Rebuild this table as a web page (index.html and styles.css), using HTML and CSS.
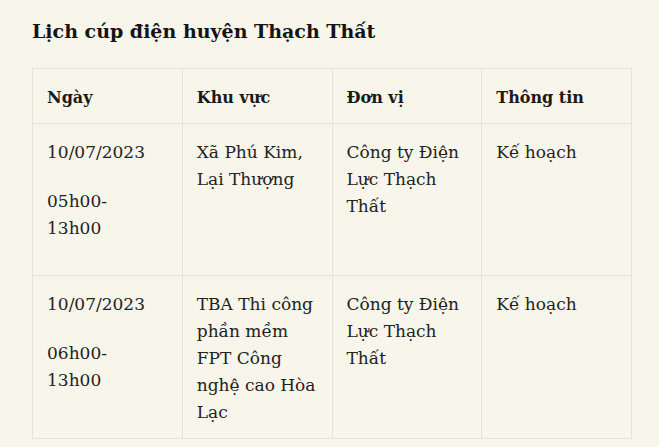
FILE: index.html
```html
<!DOCTYPE html>
<html lang="vi">
<head>
<meta charset="utf-8">
<link rel="stylesheet" href="styles.css">
</head>
<body>
<div class="page">
  <h2 class="title">Lịch cúp điện huyện Thạch Thất</h2>
  <table class="schedule">
    <thead>
      <tr>
        <th>Ngày</th>
        <th>Khu vực</th>
        <th>Đơn vị</th>
        <th>Thông tin</th>
      </tr>
    </thead>
    <tbody>
      <tr>
        <td class="date-cell"><p class="para">10/07/2023</p><p class="para">05h00-13h00</p></td>
        <td>Xã Phú Kim, Lại Thượng</td>
        <td>Công ty Điện Lực Thạch Thất</td>
        <td>Kế hoạch</td>
      </tr>
      <tr>
        <td class="date-cell"><p class="para">10/07/2023</p><p class="para">06h00-13h00</p></td>
        <td>TBA Thi công phần mềm FPT Công nghệ cao Hòa Lạc</td>
        <td>Công ty Điện Lực Thạch Thất</td>
        <td>Kế hoạch</td>
      </tr>
    </tbody>
  </table>
</div>
</body>
</html>
```

FILE: styles.css
```css
html, body {
  margin: 0;
  padding: 0;
  background: #f8f5ea;
}
body {
  font-family: "DejaVu Serif", serif;
  color: #222222;
}
.page {
  padding: 16px 27px 0 32px;
}
.title {
  margin: 0 0 22px 0;
  font-size: 19px;
  line-height: 30px;
  font-weight: bold;
  color: #141414;
}
.schedule {
  border-collapse: collapse;
  width: 600px;
  table-layout: fixed;
}
.schedule th,
.schedule td {
  border: 1px solid #e6e3da;
  padding: 15px 12px 12px 14px;
  vertical-align: top;
  text-align: left;
  font-size: 17px;
  line-height: 27px;
}
.schedule th {
  font-size: 16px;
  font-weight: bold;
  color: #1a1a1a;
}
.schedule .date-cell {
  padding-right: 26px;
}
.para {
  margin: 0 0 21.5px 0;
}
```
